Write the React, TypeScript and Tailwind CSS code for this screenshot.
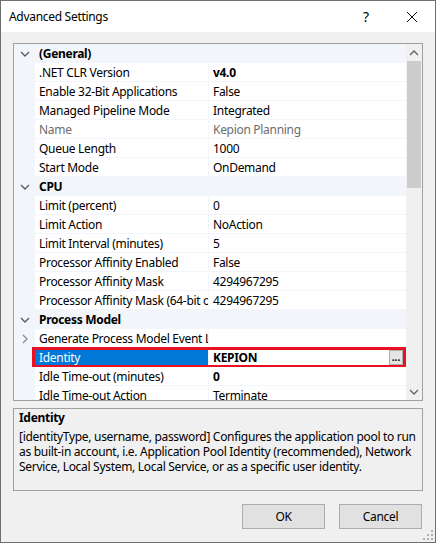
import React from "react";

type Row =
  | { kind: "cat"; label: string }
  | { kind: "prop"; name: string; value: string; bold?: boolean; dim?: boolean; expand?: boolean; selected?: boolean };

const rows: Row[] = [
  { kind: "cat", label: "(General)" },
  { kind: "prop", name: ".NET CLR Version", value: "v4.0", bold: true },
  { kind: "prop", name: "Enable 32-Bit Applications", value: "False" },
  { kind: "prop", name: "Managed Pipeline Mode", value: "Integrated" },
  { kind: "prop", name: "Name", value: "Kepion Planning", dim: true },
  { kind: "prop", name: "Queue Length", value: "1000" },
  { kind: "prop", name: "Start Mode", value: "OnDemand" },
  { kind: "cat", label: "CPU" },
  { kind: "prop", name: "Limit (percent)", value: "0" },
  { kind: "prop", name: "Limit Action", value: "NoAction" },
  { kind: "prop", name: "Limit Interval (minutes)", value: "5" },
  { kind: "prop", name: "Processor Affinity Enabled", value: "False" },
  { kind: "prop", name: "Processor Affinity Mask", value: "4294967295" },
  { kind: "prop", name: "Processor Affinity Mask (64-bit option)", value: "4294967295" },
  { kind: "cat", label: "Process Model" },
  { kind: "prop", name: "Generate Process Model Event Log Entry", value: "", expand: true },
  { kind: "prop", name: "Identity", value: "KEPION", bold: true, selected: true },
  { kind: "prop", name: "Idle Time-out (minutes)", value: "0", bold: true },
  { kind: "prop", name: "Idle Time-out Action", value: "Terminate" },
];

const ChevronDown = ({ className = "" }: { className?: string }) => (
  <svg width="10" height="6" viewBox="0 0 10 6" className={className}>
    <path d="M1 1 L5 5 L9 1" fill="none" stroke="currentColor" strokeWidth="1.3" />
  </svg>
);

const ChevronRight = () => (
  <svg width="6" height="10" viewBox="0 0 6 10">
    <path d="M1 1 L5 5 L1 9" fill="none" stroke="currentColor" strokeWidth="1.3" />
  </svg>
);

function GridRow({ row }: { row: Row }) {
  if (row.kind === "cat") {
    return (
      <div className="flex h-[19px] shrink-0 items-center bg-[#f2f5fa]">
        <div className="flex w-[21px] items-center justify-center text-[#5a5a5a]">
          <ChevronDown />
        </div>
        <span className="pl-[4px] pt-px font-bold">{row.label}</span>
      </div>
    );
  }
  return (
    <div className="relative flex h-[19px] shrink-0 bg-[#f2f5fa]">
      <div className="flex w-[21px] items-center justify-center text-[#8a8a8a]">
        {row.expand && <ChevronRight />}
      </div>
      <div
        className={`mb-px flex w-[173px] items-center overflow-hidden whitespace-nowrap pl-[4px] pt-px ${
          row.selected ? "bg-[#0078d7] text-white" : "bg-white"
        } ${row.dim ? "text-[#6d6d6d]" : ""}`}
      >
        {row.name}
      </div>
      <div
        className={`mb-px ml-px flex flex-1 items-center whitespace-nowrap bg-white pl-[4px] pt-px ${row.bold ? "font-bold" : ""} ${
          row.dim ? "text-[#6d6d6d]" : ""
        }`}
      >
        <span className="flex-1">{row.value}</span>
        {row.selected && (
          <div className="mr-[3px] flex h-[15px] w-[14px] items-end justify-center border border-[#adadad] bg-[#e5e5e5] pb-[2px] text-[10px] font-bold leading-none tracking-normal">
            ...
          </div>
        )}
      </div>
      {row.selected && (
        <div className="pointer-events-none absolute -top-px -bottom-px left-[18px] right-0 border-[3px] border-[#e81123]" />
      )}
    </div>
  );
}

export default function App() {
  return (
    <div
      className="flex h-[543px] w-[436px] flex-col border border-[#6f6f6f] bg-[#f0f0f0] text-[12px] tracking-[-0.3px] text-black"
      style={{ fontFamily: '"Noto Sans", "Open Sans", sans-serif' }}
    >
      <div className="flex h-[31px] shrink-0 items-center bg-white pl-[8px]">
        <span className="flex-1">Advanced Settings</span>
        <span className="w-[46px] text-center text-[14px]">?</span>
        <div className="flex w-[46px] items-center justify-center">
          <svg width="12" height="12" viewBox="0 0 12 12">
            <path d="M1 1 L11 11 M11 1 L1 11" stroke="#111" strokeWidth="1" />
          </svg>
        </div>
      </div>

      <div className="mx-[12px] mt-[11px] flex h-[358px] shrink-0 border border-[#a0a0a0] bg-[#f2f5fa]">
        <div className="flex flex-1 flex-col overflow-hidden">
          {rows.map((r, i) => (
            <GridRow key={i} row={r} />
          ))}
        </div>
        <div className="flex w-[16px] flex-col bg-[#f0f0f0]">
          <div className="flex h-[17px] items-center justify-center text-[#606060]">
            <ChevronDown className="rotate-180" />
          </div>
          <div className="mx-px h-[127px] bg-[#cdcdcd]" />
          <div className="flex-1" />
          <div className="flex h-[17px] items-center justify-center text-[#606060]">
            <ChevronDown />
          </div>
        </div>
      </div>

      <div className="mx-[12px] mt-[7px] h-[83px] shrink-0 border border-[#a0a0a0] pl-[5px] pr-[2px] pt-[1px] leading-[15px]">
        <div className="font-bold">Identity</div>
        <p className="mt-[4px]">
          [identityType, username, password] Configures the application pool to run as built-in account, i.e. Application
          Pool Identity (recommended), Network Service, Local System, Local Service, or as a specific user identity.
        </p>
      </div>

      <div className="relative flex flex-1 items-start justify-end gap-[14px] pr-[13px] pt-[13px]">
        <button className="h-[25px] w-[83px] border border-[#adadad] bg-[#e1e1e1]">OK</button>
        <button className="h-[25px] w-[83px] border border-[#adadad] bg-[#e1e1e1]">Cancel</button>
        <svg className="absolute bottom-[2px] right-[2px]" width="10" height="10" viewBox="0 0 10 10" fill="#b0b0b0">
          <rect x="8" y="0" width="2" height="2" />
          <rect x="4" y="4" width="2" height="2" />
          <rect x="8" y="4" width="2" height="2" />
          <rect x="0" y="8" width="2" height="2" />
          <rect x="4" y="8" width="2" height="2" />
          <rect x="8" y="8" width="2" height="2" />
        </svg>
      </div>
    </div>
  );
}
